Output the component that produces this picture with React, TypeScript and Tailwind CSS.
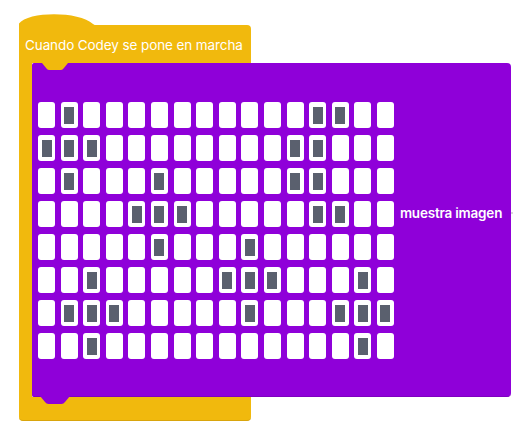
import React from "react";

const PATTERN: number[][] = [
  [1, 12, 13],
  [0, 1, 2, 11, 12],
  [1, 5, 11, 12],
  [4, 5, 6, 12, 13],
  [5, 9],
  [2, 8, 9, 10, 14],
  [1, 2, 3, 9, 13, 14, 15],
  [2, 14],
];

function Cell({ on }: { on: boolean }) {
  return (
    <div className="w-[17px] h-[26px] rounded-[3px] bg-white flex items-center justify-center">
      {on && <div className="w-[10px] h-[17px] bg-[#5a606e]" />}
    </div>
  );
}

export default function App() {
  return (
    <div
      className="w-[532px] h-[447px] bg-white pt-[25px] pl-[19px]"
      style={{ fontFamily: "Inter, 'Open Sans', sans-serif" }}
    >
      <div className="flex flex-col">
        {/* hat label */}
        <div className="relative w-[232px] h-[38px] bg-[#f1b90d] rounded-tr-[4px]">
          <svg
            className="absolute left-0 top-[-11px]"
            width="80"
            height="12"
            viewBox="0 0 80 12"
          >
            <path
              d="M0 12 L0 9.5 C 9 -2.8, 60 -3.2, 74 10 Q 76 12 80 12 Z"
              fill="#f1b90d"
            />
          </svg>
          <div className="relative pl-[6px] pt-[11px] text-[13.5px] leading-[18px] text-white tracking-[-0.1px]">
            Cuando Codey se pone en marcha
          </div>
        </div>
        {/* middle */}
        <div className="flex">
          <div className="w-[13px] bg-[#f1b90d]" />
          <div className="relative z-10 w-[479px] h-[334px] bg-[#8f00d9] rounded-r-[4px] rounded-l-[2px] border-b border-[#7e00c0] pl-[6px] pt-[39px] flex items-start">
            <svg
              className="absolute left-[10px] top-0"
              width="26"
              height="7"
              viewBox="0 0 26 7"
            >
              <path d="M0 0 L26 0 L21.5 5.5 Q20.3 7 18.5 7 L7.5 7 Q5.7 7 4.5 5.5 Z" fill="#f1b90d" />
            </svg>
            <svg
              className="absolute left-[8px] bottom-[-8px]"
              width="30"
              height="8"
              viewBox="0 0 30 8"
            >
              <path d="M0 0 L30 0 L25 6 Q23.6 8 21.5 8 L8.5 8 Q6.4 8 5 6 Z" fill="#8f00d9" />
            </svg>
            <div className="grid grid-cols-[repeat(16,17px)] gap-x-[5.6px] gap-y-[7px]">
              {PATTERN.map((row, r) =>
                Array.from({ length: 16 }, (_, c) => (
                  <Cell key={`${r}-${c}`} on={row.includes(c)} />
                ))
              )}
            </div>
            <div className="ml-[6px] mt-[103px] text-[13.5px] leading-[16px] font-semibold text-white whitespace-nowrap tracking-[-0.2px]">
              muestra imagen
            </div>
          </div>
          <div className="self-center mt-[-34px] ml-[-1px] w-[3px] h-[2px] bg-[#d8d8d8]" />
        </div>
        {/* bottom bar */}
        <div className="w-[232px] h-[24px] bg-[#f1b90d] rounded-b-[4px] border-b border-[#d9a50c]" />
      </div>
    </div>
  );
}
